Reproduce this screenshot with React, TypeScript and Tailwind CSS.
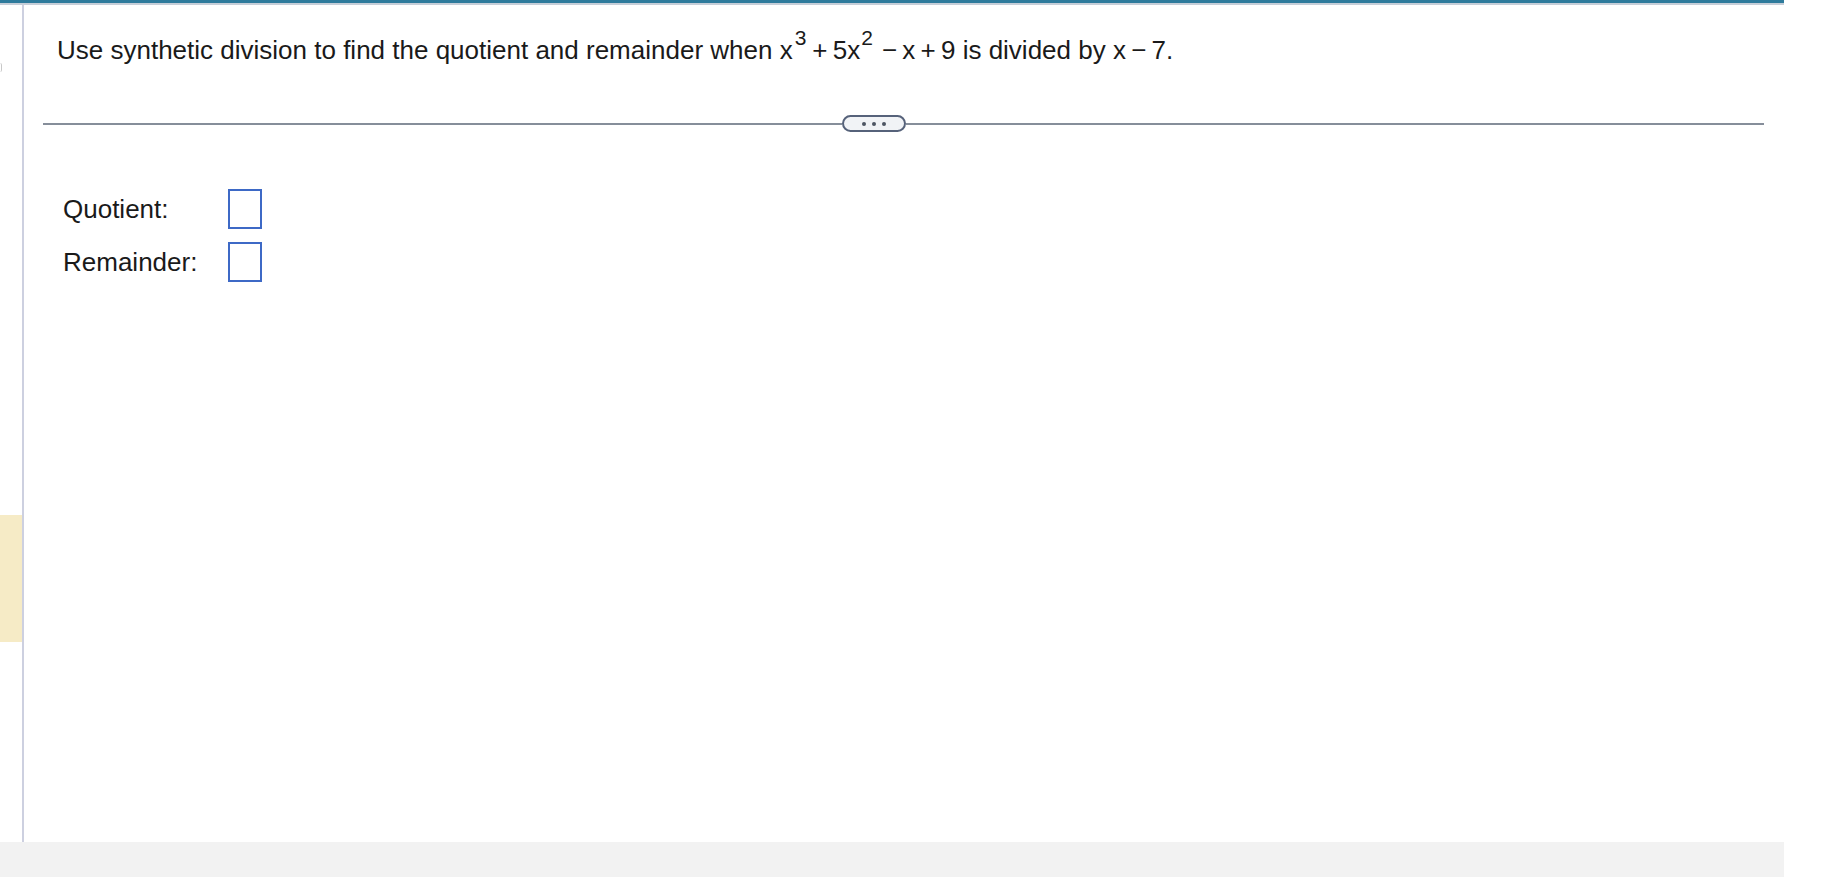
export default function App() {
  return (
    <div className="w-[1834px] h-[877px] bg-white overflow-hidden font-['Liberation_Sans',Arial,sans-serif] text-[#1a1a1a]">
      <div className="w-[1784px] h-full flex flex-col">
        {/* top bar */}
        <div className="h-[3px] bg-[#2e7b9c]" />
        <div className="h-[2px] bg-[#c6ced8]" />

        <div className="flex flex-1 min-h-0">
          {/* left rail */}
          <div className="w-[22px] flex flex-col">
            <div className="h-[58px]" />
            <div className="w-[2px] h-[9px] rounded-r-full border-r border-[#c8c8c8]" />
            <div className="h-[443px]" />
            <div className="h-[127px] bg-[#f6ebc6]" />
          </div>
          <div className="w-[2px] bg-[#cdd0e0]" />

          {/* main */}
          <div className="flex-1 flex flex-col">
            <p className="pl-[33px] pt-[22px] h-[52px] text-[26px] leading-[30px] whitespace-nowrap">
              Use synthetic division to find the quotient and remainder when x
              <span className="text-[21px] leading-none align-[14px] ml-[2px]">3</span>
              <span className="ml-[6px] [word-spacing:-2px]">+ 5x</span>
              <span className="text-[21px] leading-none align-[14px] ml-[1px]">2</span>
              <span className="ml-[9px] [word-spacing:-2px]">− x + 9</span>
              <span> is divided by </span>
              <span className="[word-spacing:-2px]">x − 7.</span>
            </p>

            {/* divider with pill */}
            <div className="mt-[58px] ml-[19px] mr-[20px] h-[17px] flex items-center">
              <div className="w-[799px] h-[2px] bg-[#868e9a]" />
              <button className="w-[64px] h-[17px] rounded-full border-2 border-[#56627a] bg-[#f1f3f6] flex items-center justify-center gap-[6px]">
                <span className="w-[4px] h-[4px] rounded-full bg-[#4d5563]" />
                <span className="w-[4px] h-[4px] rounded-full bg-[#4d5563]" />
                <span className="w-[4px] h-[4px] rounded-full bg-[#4d5563]" />
              </button>
              <div className="flex-1 h-[2px] bg-[#868e9a]" />
            </div>

            {/* answers */}
            <div className="mt-[57px] pl-[39px] flex flex-col gap-[13px] text-[26px]">
              <div className="flex items-center">
                <span className="w-[165px]">Quotient:</span>
                <div className="w-[34px] h-[40px] border-2 border-[#3d69c6] bg-white" />
              </div>
              <div className="flex items-center">
                <span className="w-[165px]">Remainder:</span>
                <div className="w-[34px] h-[40px] border-2 border-[#3d69c6] bg-white" />
              </div>
            </div>
          </div>
        </div>

        {/* footer */}
        <div className="h-[35px] bg-[#f2f2f2]" />
      </div>
    </div>
  );
}
